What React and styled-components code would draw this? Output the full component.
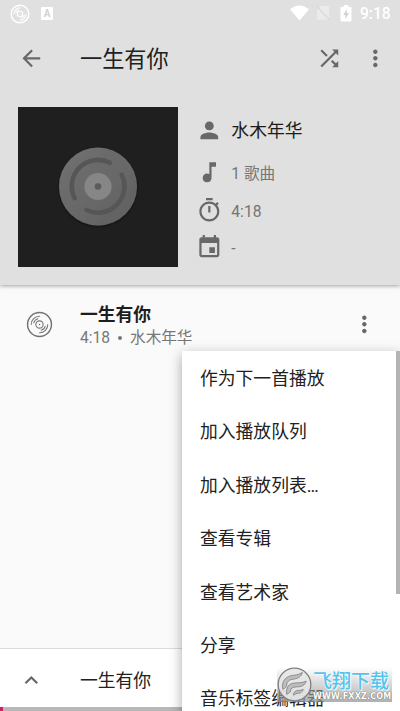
import React from 'react';
import styled, { createGlobalStyle } from 'styled-components';

const icons = {
  back: 'M20 11H7.83l5.59-5.59L12 4l-8 8 8 8 1.41-1.41L7.83 13H20v-2z',
  shuffle:
    'M10.59 9.17L5.41 4 4 5.41l5.17 5.17 1.42-1.41zM14.5 4l2.04 2.04L4 18.59 5.41 20 17.96 7.46 20 9.5V4h-5.5zm.33 9.41l-1.41 1.41 3.13 3.13L14.5 20H20v-5.5l-2.04 2.04-3.13-3.13z',
  more:
    'M12 8c1.1 0 2-.9 2-2s-.9-2-2-2-2 .9-2 2 .9 2 2 2zm0 2c-1.1 0-2 .9-2 2s.9 2 2 2 2-.9 2-2-.9-2-2-2zm0 6c-1.1 0-2 .9-2 2s.9 2 2 2 2-.9 2-2-.9-2-2-2z',
  person:
    'M12 12c2.21 0 4-1.79 4-4s-1.79-4-4-4-4 1.79-4 4 1.79 4 4 4zm0 2c-2.67 0-8 1.34-8 4v2h16v-2c0-2.66-5.33-4-8-4z',
  note:
    'M12 3v10.55c-.59-.34-1.27-.55-2-.55-2.21 0-4 1.79-4 4s1.79 4 4 4 4-1.79 4-4V7h4V3h-6z',
  timer:
    'M15 1H9v2h6V1zm-4 13h2V8h-2v6zm8.03-6.61l1.42-1.42c-.43-.51-.9-.99-1.41-1.41l-1.42 1.42C16.07 4.74 14.12 4 12 4c-4.97 0-9 4.03-9 9s4.02 9 9 9 9-4.03 9-9c0-2.12-.74-4.07-1.97-5.61zM12 20c-3.87 0-7-3.13-7-7s3.13-7 7-7 7 3.13 7 7-3.13 7-7 7z',
  event:
    'M17 12h-5v5h5v-5zM16 1v2H8V1H6v2H5c-1.11 0-1.99.9-1.99 2L3 19c0 1.1.89 2 2 2h14c1.1 0 2-.9 2-2V5c0-1.1-.9-2-2-2h-1V1h-2zm3 18H5V8h14v11z',
  up: 'M12 8l-6 6 1.41 1.41L12 10.83l4.59 4.58L18 14z',
};

const Icon = ({ name }) => (
  <IconSvg viewBox="0 0 24 24">
    <path d={icons[name]} />
  </IconSvg>
);

const Disc = ({ size, weight = 1.4 }) => (
  <DiscSvg
    width={size}
    height={size}
    viewBox="0 0 26 26"
    fill="none"
    stroke="currentColor"
    strokeWidth={weight}
    strokeLinecap="round"
  >
    <circle cx="13" cy="13" r="11.5" />
    <circle cx="13" cy="13" r="3.5" strokeWidth={weight * 0.75} />
    <circle cx="13" cy="13" r="0.7" fill="currentColor" stroke="none" />
    <g strokeWidth={weight * 0.7}>
      <path d="M5 13A8 8 0 0 1 13 5" />
      <path d="M7.4 11.4A5.8 5.8 0 0 1 11.4 7.4" />
      <path d="M21 13A8 8 0 0 1 13 21" />
      <path d="M18.6 14.6A5.8 5.8 0 0 1 14.6 18.6" />
    </g>
  </DiscSvg>
);

const Signals = () => (
  <SignalsSvg width="41" height="18" viewBox="290 4 41 18">
    <path d="M291 9.3Q300.5 1.6 310 9.3L300.5 20.5Z" fill="#fff" />
    <path d="M322 6h8v13.5h-12V10z" fill="#ebebeb" />
    <path d="M317.5 6l13 14" stroke="#dadada" strokeWidth="1.5" />
  </SignalsSvg>
);

const Battery = () => (
  <svg width="12" height="17" viewBox="0 0 12 17">
    <path
      d="M4 0h4v1.8h2.3q1.2 0 1.2 1.2v12.3q0 1.2-1.2 1.2H1.7q-1.2 0-1.2-1.2V3q0-1.2 1.2-1.2H4z"
      fill="#fff"
    />
    <path d="M6.8 4.3L3.2 10h2.2v4l3.5-6H6.8z" fill="#d2d2d2" />
  </svg>
);

const AlbumArt = () => (
  <Art viewBox="0 0 160 160">
    <defs>
      <linearGradient id="vinyl" x1="0" y1="0" x2="1" y2="1">
        <stop offset="0" stopColor="#717171" />
        <stop offset="1" stopColor="#606060" />
      </linearGradient>
      <filter id="vinylShadow" x="-20%" y="-20%" width="140%" height="140%">
        <feDropShadow dx="0" dy="1" stdDeviation="1.8" floodOpacity="0.5" />
      </filter>
    </defs>
    <circle cx="80" cy="79.5" r="39" fill="url(#vinyl)" filter="url(#vinylShadow)" />
    <g fill="none" stroke="#565656" strokeWidth="4.6" strokeLinecap="round">
      <path d="M56.7 91.3A26.3 26.3 0 0 1 92 55.8" />
      <path d="M103.7 67.7A26.3 26.3 0 0 1 68.5 103" />
    </g>
    <circle cx="80" cy="79.5" r="13.6" fill="#868686" />
    <circle cx="80" cy="79.5" r="3.3" fill="#5b5b5b" />
  </Art>
);

const details = [
  { icon: 'note', text: '1 歌曲', lift: 1 },
  { icon: 'timer', text: '4:18', lift: -2 },
  { icon: 'event', text: '-', lift: -2 },
];

const menuItems = [
  '作为下一首播放',
  '加入播放队列',
  '加入播放列表…',
  '查看专辑',
  '查看艺术家',
  '分享',
  '音乐标签编辑器',
];

const App = () => (
  <Screen>
    <GlobalStyle />
    <Header>
      <StatusBar>
        <Disc size={20} weight={1.9} />
        <Letter>A</Letter>
        <Signals />
        <Battery />
        <Clock>9:18</Clock>
      </StatusBar>
      <Toolbar>
        <Icon name="back" />
        <Title>一生有你</Title>
        <Actions>
          <Icon name="shuffle" />
          <Icon name="more" />
        </Actions>
      </Toolbar>
      <Album>
        <AlbumArt />
        <Details>
          <DetailRow $artist $lift={1}>
            <Icon name="person" />
            <span>水木年华</span>
          </DetailRow>
          {details.map(({ icon, text, lift }) => (
            <DetailRow key={icon} $lift={lift}>
              <Icon name={icon} />
              <span>{text}</span>
            </DetailRow>
          ))}
        </Details>
      </Album>
    </Header>
    <Songs>
      <Song>
        <Disc size={27} />
        <SongText>
          <SongTitle>一生有你</SongTitle>
          <SongInfo>
            <span>4:18</span>
            <Dot />
            <span>水木年华</span>
          </SongInfo>
        </SongText>
        <Icon name="more" />
      </Song>
    </Songs>
    <Player>
      <PlayerRow>
        <Icon name="up" />
        <PlayerTitle>一生有你</PlayerTitle>
      </PlayerRow>
      <Progress>
        <Played />
      </Progress>
    </Player>
    <Menu>
      {menuItems.map(item => (
        <MenuItem key={item}>{item}</MenuItem>
      ))}
      <Scrollbar />
    </Menu>
    <Watermark>
      <Logo viewBox="0 0 36 36">
        <circle
          cx="18"
          cy="18"
          r="16.8"
          fill="#e6e6e6"
          fillOpacity="0.92"
          stroke="#808080"
          strokeWidth="1.3"
        />
        <g fill="#bdbdbd" stroke="#7c7c7c" strokeWidth="0.8" strokeLinejoin="round">
          <path d="M6 23C4 14 10 9 17 8.5c4-.3 6-1 9-3-.5 4-4 6.5-9 7-5 .5-7 3-7 6 0 2-1.500 3-4 4.500z" />
          <path d="M10 28c-1-7 2-11 8-11.500 5-.4 8 0 12-2-1 4.500-5 6-10 6-4 0-6 1.500-6 4 0 1.500-2 2.500-4 3.500z" />
          <path d="M17 29c0-3 2-5 5-5 2 0 3 0 5-1-1 3-3 4-5 4-2 0-3 1-5 2z" />
        </g>
      </Logo>
      <Brand>
        <BrandName>飞翔下载</BrandName>
        <BrandUrl>WWW.FXXZ.COM</BrandUrl>
      </Brand>
    </Watermark>
  </Screen>
);

export default App;

const GlobalStyle = createGlobalStyle`
  body {
    margin: 0;
    overflow: hidden;
  }
`;

const Screen = styled.div`
  position: relative;
  display: flex;
  flex-direction: column;
  width: 400px;
  height: 711px;
  overflow: hidden;
  background: #fafafa;
  color: #212121;
  font-family: Roboto, 'Noto Sans CJK SC', sans-serif;
`;

const IconSvg = styled.svg`
  flex: none;
  width: 26.67px;
  height: 26.67px;
  fill: #686868;
`;

const DiscSvg = styled.svg`
  flex: none;
`;

const Header = styled.header`
  z-index: 1;
  flex: none;
  height: 284.5px;
  background: #e0e0e0;
  box-shadow: 0 1px 4px rgba(0, 0, 0, 0.36);
`;

const StatusBar = styled.div`
  display: flex;
  align-items: center;
  height: 27px;
  padding: 0 8.5px 0 10px;
  box-sizing: border-box;
  color: #fff;
`;

const Letter = styled.span`
  width: 12px;
  height: 13px;
  margin-left: 11px;
  border-radius: 1px;
  background: #fff;
  color: #d2d2d2;
  font-size: 10px;
  font-weight: 700;
  line-height: 13px;
  text-align: center;
`;

const SignalsSvg = styled.svg`
  flex: none;
  margin: 0 10px 1px auto;
`;

const Clock = styled.span`
  width: 31.5px;
  margin-left: 8px;
  padding-top: 1px;
  font-size: 15.6px;
  font-weight: 500;
  white-space: nowrap;
`;

const Toolbar = styled.div`
  display: flex;
  align-items: center;
  height: 62px;
  padding: 0 11px 0 18px;
`;

const Title = styled.h1`
  flex: 1;
  margin: 0 0 0 35.3px;
  padding-bottom: 2px;
  font-size: 22.2px;
  font-weight: 400;
`;

const Actions = styled.div`
  display: flex;
  gap: 20px;
`;

const Album = styled.div`
  display: flex;
  padding: 18px 18px 0;
`;

const Art = styled.svg`
  flex: none;
  width: 160px;
  height: 160px;
  background: #1f1f1f;
`;

const Details = styled.div`
  display: flex;
  flex-direction: column;
  gap: 10.8px;
  margin: 10px 0 0 17.7px;
`;

const DetailRow = styled.div`
  display: flex;
  align-items: center;
  gap: 9px;
  height: 26.67px;
  margin-bottom: ${props => (props.$artist ? '4.8px' : '0')};
  color: ${props => (props.$artist ? '#1c1c1c' : '#757575')};
  font-size: ${props => (props.$artist ? '17.8px' : '15.6px')};

  span {
    margin-bottom: ${props => props.$lift * 2}px;
  }
`;

const Songs = styled.main`
  flex: 1;
`;

const Song = styled.div`
  display: flex;
  align-items: center;
  height: 79px;
  padding: 0 22.5px 0 26px;
  color: #737373;
`;

const SongText = styled.div`
  flex: 1;
  margin: 3px 0 0 27px;
`;

const SongTitle = styled.div`
  color: #1d1d1d;
  font-size: 17.8px;
  font-weight: 700;
  line-height: 24px;
`;

const SongInfo = styled.div`
  display: flex;
  align-items: center;
  color: #777;
  font-size: 15.6px;
  line-height: 22px;
`;

const Dot = styled.i`
  width: 4px;
  height: 4px;
  margin: 0 8px;
  border-radius: 50%;
  background: #777;
`;

const Player = styled.footer`
  display: flex;
  flex-direction: column;
  height: 62px;
  border-top: 1px solid #dcdcdc;
  background: #fff;
`;

const PlayerRow = styled.div`
  display: flex;
  flex: 1;
  align-items: center;
  gap: 35.3px;
  padding: 4px 18px 0;
`;

const PlayerTitle = styled.span`
  padding-bottom: 2px;
  font-size: 17.8px;
`;

const Progress = styled.div`
  height: 4px;
  background: #b8b8b8;
`;

const Played = styled.div`
  width: 3px;
  height: 4px;
  background: #d81b60;
`;

const Menu = styled.div`
  position: absolute;
  z-index: 2;
  top: 351px;
  left: 182px;
  width: 218px;
  height: 374px;
  background: #fff;
  box-shadow: 0 4px 12px rgba(0, 0, 0, 0.34);
`;

const MenuItem = styled.div`
  display: flex;
  align-items: center;
  box-sizing: border-box;
  height: 53.4px;
  padding: 0 0 1.2px 18px;
  font-size: 17.8px;
`;

const Scrollbar = styled.div`
  position: absolute;
  top: 0;
  right: 0;
  width: 4.5px;
  height: 243px;
  background: #b4b4b4;
`;

const Watermark = styled.div`
  position: absolute;
  z-index: 3;
  top: 667px;
  left: 277px;
  display: flex;
  width: 115px;
  height: 35px;
  background: linear-gradient(rgba(255, 255, 255, 0.2), rgba(150, 150, 150, 0.75));
`;

const Logo = styled.svg`
  flex: none;
  width: 35px;
  height: 35px;
`;

const Brand = styled.div`
  display: flex;
  flex-direction: column;
  width: 80px;
  padding-left: 1px;
  white-space: nowrap;
`;

const BrandName = styled.div`
  height: 25px;
  color: #52c4ee;
  font-family: 'Noto Sans CJK SC', sans-serif;
  font-size: 19px;
  font-weight: 500;
  line-height: 26px;
  text-shadow: 0 0 2px #fff, 1px 1px 1px #fff;
`;

const BrandUrl = styled.div`
  color: #fff;
  font-family: 'DejaVu Sans', sans-serif;
  font-size: 8px;
  font-weight: 700;
  line-height: 9px;
  letter-spacing: 0.2px;
  text-shadow: 0 0 1px #666, 0 0 1px #777;
`;
